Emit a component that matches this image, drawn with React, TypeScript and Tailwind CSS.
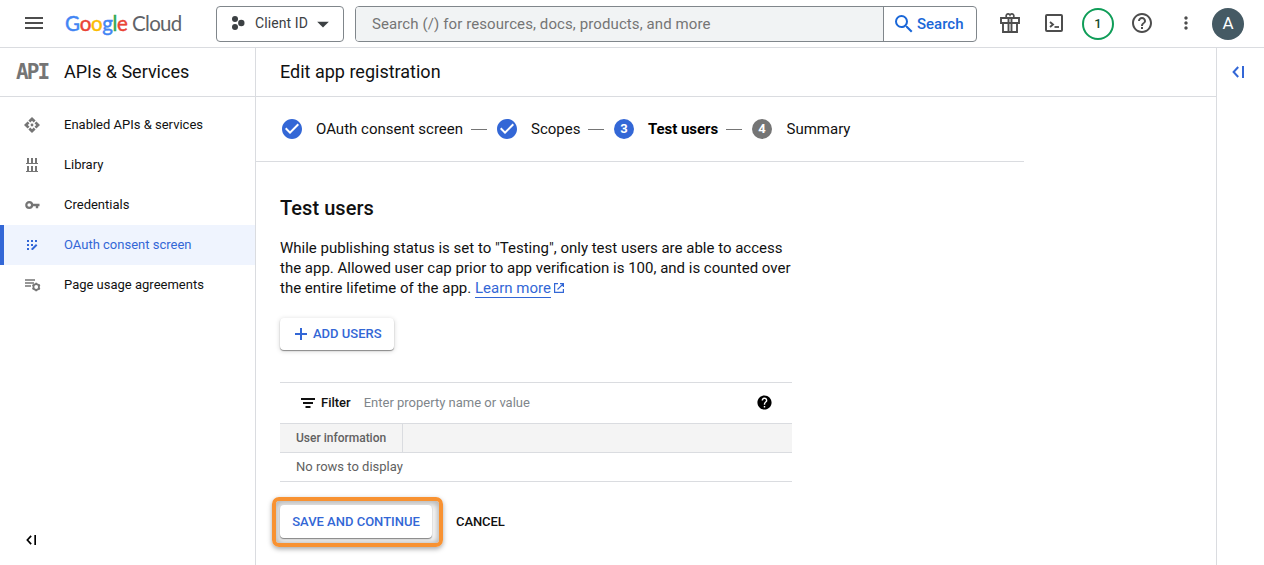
import type { ReactNode } from "react";
import {
  MdArrowDropDown,
  MdCheckCircle,
  MdHelp,
  MdHelpOutline,
  MdMoreVert,
  MdSearch,
} from "react-icons/md";

function Logo() {
  return (
    <div className="ml-[19px] flex h-[30px] w-[119px] items-center whitespace-nowrap font-['Lato',sans-serif]">
      <span className="flex w-[67px] text-[20.5px] tracking-[-0.35px] [-webkit-text-stroke:0.45px_currentColor]">
        <span className="text-[#4285f4]">G</span>
        <span className="text-[#ea4335]">o</span>
        <span className="text-[#fbbc04]">o</span>
        <span className="text-[#4285f4]">g</span>
        <span className="text-[#34a853]">l</span>
        <span className="text-[#ea4335]">e</span>
      </span>
      <span className="text-[20.5px] tracking-[-0.7px] text-[#5f6368]">Cloud</span>
    </div>
  );
}

function CollapseIcon({ className }: { className: string }) {
  return (
    <svg viewBox="0 0 12 12" className={className} fill="none" stroke="currentColor" strokeWidth="2">
      <path d="M6.2 1 1.6 6l4.6 5" />
      <path d="M11 0v12" />
    </svg>
  );
}

function ApiIcon() {
  return (
    <svg viewBox="0 0 16 16" className="size-[16px]" fill="currentColor">
      <path d="M8 0l3.600 3.600-1.900 1.900L8 3.800 6.300 5.500 4.400 3.600z" />
      <path d="M8 16l-3.600-3.600 1.900-1.900L8 12.200l1.700-1.700 1.900 1.900z" />
      <path d="M0 8l3.600-3.600 1.900 1.900L3.800 8l1.700 1.700-1.900 1.900z" />
      <path d="M16 8l-3.600 3.600-1.900-1.900L12.200 8l-1.700-1.700 1.900-1.900z" />
      <circle cx="8" cy="8" r="1.400" />
    </svg>
  );
}

function LibraryIcon() {
  return (
    <svg viewBox="0 0 12 14" className="h-[14px] w-[12px]" fill="currentColor">
      <path d="M1 0h2v5h2V0h2v5h2V0h2v5h1v1H0V5h1zM1 8h2v5h2V8h2v5h2V8h2v5h1v1H0v-1h1z" />
    </svg>
  );
}

function KeyIcon() {
  return (
    <svg viewBox="0 0 15 8" className="h-[8px] w-[15px]" fill="none" stroke="currentColor">
      <circle cx="4.200" cy="4" r="2.900" strokeWidth="2.200" />
      <path d="M7 4h7.500M12 4v3.200" strokeWidth="2.400" />
    </svg>
  );
}

function ConsentIcon() {
  return (
    <svg viewBox="0 0 12 12" className="h-[12px] w-[12px]" fill="currentColor">
      <path d="M1 1h2v2H1zM5 1h2v2H5zM9 1h2v2H9zM1 5h2v2H1zM5 5h2v2H5zM1 9h2v2H1z" />
      <path d="m5.500 9.600 4.500-4.500 1.400 1.400L6.900 11H5.500z" />
    </svg>
  );
}

function AgreementsIcon() {
  return (
    <svg viewBox="0 0 16 14" className="ml-[1px] h-[14px] w-[16px]" fill="none" stroke="currentColor">
      <path d="M0 2h10M0 5h9M0 8h6" strokeWidth="1.600" />
      <circle cx="11.200" cy="9" r="2.800" strokeWidth="1.800" />
      <path
        d="M11.200 4.700v1.600M11.200 11.700v1.600M7.500 6.900l1.400.8M13.500 10.300l1.400.8M7.500 11.100l1.400-.8M13.500 7.700l1.400-.8"
        strokeWidth="1.800"
      />
    </svg>
  );
}

function GiftIcon() {
  return (
    <svg viewBox="0 0 20 22" className="h-[22px] w-[20px]" fill="none" stroke="currentColor">
      <path d="M1 6h18v5H1zM3 11v9h14v-9M8.500 6v14M11.500 6v14" strokeWidth="1.900" />
      <path d="M6.200 5.500V3.500a2 2 0 0 1 3.800-.5 2 2 0 0 1 3.800.5v2" strokeWidth="1.700" />
    </svg>
  );
}

function ShellIcon() {
  return (
    <svg viewBox="0 0 18 18" className="h-[18px] w-[18px]" fill="none" stroke="currentColor">
      <rect x="1" y="1" width="16" height="16" rx="1" strokeWidth="2" />
      <path d="m5 8 3 2.500L5 13" strokeWidth="1.900" />
      <path d="M9.500 13H14" strokeWidth="1.800" />
    </svg>
  );
}

function ExternalIcon() {
  return (
    <svg viewBox="0 0 10 10" className="ml-[3px] inline h-[10px] w-[10px] align-[0px]" fill="none" stroke="currentColor" strokeWidth="1.200">
      <path d="M4 .6H.6v8.800h8.800V6M6 .6h3.400V4M9.200.8 3.500 6.500" />
    </svg>
  );
}

function Header() {
  return (
    <header className="flex h-[48px] shrink-0 items-center border-b border-[#dadce0] text-[#4d4d4d]">
      <svg viewBox="0 0 18 12" className="-mt-[2px] ml-[25px] h-[12px] w-[18px] shrink-0" fill="currentColor">
        <path d="M0 0h18v2H0zM0 5h18v2H0zM0 10h18v2H0z" />
      </svg>
      <span className="w-[3px]" />
      <Logo />
      <button className="ml-[32px] flex h-[36px] w-[128px] shrink-0 items-center rounded-[4px] border border-[#80868b] text-[14px] text-[#3c4043]">
        <svg viewBox="0 0 14 14" className="-mt-px ml-[14px] h-[14px] w-[14px]" fill="currentColor">
          <circle cx="4" cy="3" r="3" />
          <circle cx="10.300" cy="7" r="3.200" />
          <circle cx="4" cy="11" r="3" />
        </svg>
        <span className="ml-[10px] w-[52px] whitespace-nowrap text-left tracking-[0.1px]">Client ID</span>
        <MdArrowDropDown className="ml-[2px] size-[28px]" />
      </button>
      <div className="ml-[11px] flex h-[36px] w-[622px] shrink-0 overflow-hidden rounded-[4px] border border-[#80868b]">
        <div className="flex w-[527px] items-center bg-[#f1f3f4] pl-[16px] pt-px text-[15px] tracking-[0.1px] text-[#757575]">
          Search (/) for resources, docs, products, and more
        </div>
        <div className="flex flex-1 items-center border-l border-[#80868b] pl-[8px] text-[15px] font-medium text-[#1a67d8]">
          <MdSearch className="size-[24px]" />
          <span className="ml-[1px] pt-px">Search</span>
        </div>
      </div>
      <div className="ml-[23px] flex items-center">
        <span className="-mt-[2px]">
          <GiftIcon />
        </span>
        <span className="-mt-[2px] ml-[25px]">
          <ShellIcon />
        </span>
        <span className="ml-[19px] flex size-[32px] items-center justify-center rounded-full border-2 border-[#0f9d58] text-[13px] font-medium text-[#174b2e]">
          1
        </span>
        <MdHelpOutline className="-mt-[2px] ml-[16px] size-[24px]" />
        <MdMoreVert className="-mt-[2px] ml-[22px] size-[20px]" />
        <span className="ml-[16px] flex size-[32px] items-center justify-center rounded-full bg-[#455a64] pt-px text-[17px] text-white">
          A
        </span>
      </div>
    </header>
  );
}

function NavItem({ icon, label, active }: { icon: ReactNode; label: string; active?: boolean }) {
  return (
    <li
      className={
        active
          ? "flex h-[40px] items-center border-l-4 border-[#3367d6] bg-[#eff4fe] text-[#3367d6]"
          : "flex h-[40px] items-center border-l-4 border-transparent text-[#757575]"
      }
    >
      <span className="flex w-[56px] items-center justify-center">{icon}</span>
      <span className={active ? "ml-[4px] text-[13px]" : "ml-[4px] text-[13px] text-[#111111]"}>{label}</span>
    </li>
  );
}

function Sidebar() {
  return (
    <aside className="flex w-[256px] shrink-0 flex-col border-r border-[#dadce0]">
      <div className="flex h-[49px] shrink-0 items-center border-b border-[#dadce0]">
        <span className="ml-[16px] w-[48px] pt-[2px] font-['DejaVu_Sans_Mono',monospace] text-[21px] font-bold tracking-[-1.9px] text-[#757575]">
          API
        </span>
        <span className="-mt-[2px] text-[18px] text-[#111111]">APIs &amp; Services</span>
      </div>
      <ul className="mt-[8px] flex-1">
        <NavItem icon={<ApiIcon />} label="Enabled APIs & services" />
        <NavItem icon={<LibraryIcon />} label="Library" />
        <NavItem icon={<KeyIcon />} label="Credentials" />
        <NavItem active icon={<ConsentIcon />} label="OAuth consent screen" />
        <NavItem icon={<AgreementsIcon />} label="Page usage agreements" />
      </ul>
      <CollapseIcon className="mb-[20px] ml-[26px] h-[10px] w-[10px] shrink-0 text-black" />
    </aside>
  );
}

function Dash() {
  return <span className="mx-[8px] h-px w-[16px] bg-[#757575]" />;
}

function StepNumber({ n, active }: { n: number; active?: boolean }) {
  return (
    <span
      className={
        active
          ? "mx-[2px] flex size-[20px] items-center justify-center rounded-full bg-[#3367d6] text-[13px] font-bold text-white"
          : "mx-[2px] flex size-[20px] items-center justify-center rounded-full bg-[#757575] text-[13px] font-bold text-white"
      }
    >
      {n}
    </span>
  );
}

function Stepper() {
  return (
    <div className="flex h-[65px] w-[768px] items-center whitespace-nowrap border-b border-[#dadce0] pl-[24px] text-[15px]">
      <MdCheckCircle className="size-[24px] text-[#3367d6]" />
      <span className="ml-[12px] w-[147px]">OAuth consent screen</span>
      <Dash />
      <MdCheckCircle className="size-[24px] text-[#3367d6]" />
      <span className="ml-[12px] w-[49px]">Scopes</span>
      <Dash />
      <StepNumber n={3} active />
      <span className="ml-[12px] w-[70px] font-bold tracking-[-0.050px] text-black">Test users</span>
      <Dash />
      <StepNumber n={4} />
      <span className="ml-[12.500px]">Summary</span>
    </div>
  );
}

function Table() {
  return (
    <div className="mt-[32px] w-[512px] border-t border-[#dadce0] text-[13px]">
      <div className="flex h-[40px] items-center">
        <svg viewBox="0 0 14 10" className="ml-[21px] h-[10px] w-[14px]" fill="#111111">
          <path d="M0 0h14v2H0zM2 4h10v2H2zM4.500 8h5v2h-5z" />
        </svg>
        <span className="ml-[6px] font-medium">Filter</span>
        <span className="ml-[13px] flex-1 text-[#80868b]">Enter property name or value</span>
        <MdHelp className="-mt-[2px] mr-[19.500px] size-[17px] text-black" />
      </div>
      <div className="flex h-[30px] border-y border-[#dadce0] bg-[#f4f4f4]">
        <div className="flex w-[123px] items-center whitespace-nowrap border-r border-[#dadce0] pl-[16px] text-[12px] font-medium text-[#616161]">
          User information
        </div>
      </div>
      <div className="flex h-[29px] items-center border-b border-[#dadce0] pl-[16px] text-[#616161]">
        No rows to display
      </div>
    </div>
  );
}

function Content() {
  return (
    <main className="flex-1">
      <h1 className="flex h-[49px] items-center border-b border-[#dadce0] pb-[2px] pl-[24px] text-[18px]">
        Edit app registration
      </h1>
      <Stepper />
      <section className="pl-[24px] pt-[34px]">
        <h2 className="text-[20px] font-medium leading-[24px] tracking-[0.050px]">Test users</h2>
        <p className="mt-[18px] whitespace-nowrap text-[15px] leading-[20px]">
          While publishing status is set to "Testing", only test users are able to access
          <br />
          the app. Allowed user cap prior to app verification is 100, and is counted over
          <br />
          the entire lifetime of the app.{" "}
          <a className="text-[#3367d6]">
            <span className="border-b border-[#3367d6]">Learn more</span>
            <ExternalIcon />
          </a>
        </p>
        <button className="mt-[20px] flex h-[32px] w-[114px] items-center whitespace-nowrap rounded-[4px] bg-white text-[13px] font-medium text-[#3367d6] shadow-[0_1px_1px_rgba(0,0,0,0.4),0_1px_5px_rgba(0,0,0,0.18)]">
          <svg viewBox="0 0 12 12" className="ml-[15px] h-[12px] w-[12px]" fill="currentColor">
            <path d="M5 0h2v5h5v2H7v5H5V7H0V5h5z" />
          </svg>
          <span className="ml-[6px]">ADD USERS</span>
        </button>
        <Table />
        <div className="ml-[-8px] mt-[15px] flex items-center text-[13px] font-medium">
          <div className="h-[50px] w-[171px] rounded-[7px] border-4 border-[#f89232] pl-[4px] pt-[4px] shadow-[0_2px_5px_rgba(0,0,0,0.35),inset_0_1px_6px_2px_rgba(0,0,0,0.3)]">
            <button className="flex h-[33px] w-[152px] items-center justify-center whitespace-nowrap rounded-[4px] bg-white text-[#3367d6] shadow-[0_1px_1px_rgba(0,0,0,0.4),0_1px_3px_rgba(0,0,0,0.15)]">
              SAVE AND CONTINUE
            </button>
          </div>
          <button className="ml-[13px] tracking-[-0.1px]">CANCEL</button>
        </div>
      </section>
    </main>
  );
}

export default function App() {
  return (
    <div className="flex h-[565px] w-[1264px] flex-col overflow-hidden bg-white font-['Roboto',sans-serif] text-[#111111]">
      <Header />
      <div className="flex min-h-0 flex-1">
        <Sidebar />
        <Content />
        <aside className="w-[48px] shrink-0 border-l border-[#dadce0]">
          <CollapseIcon className="ml-[15px] mt-[18px] h-[12px] w-[12px] text-[#3367d6]" />
        </aside>
      </div>
    </div>
  );
}
